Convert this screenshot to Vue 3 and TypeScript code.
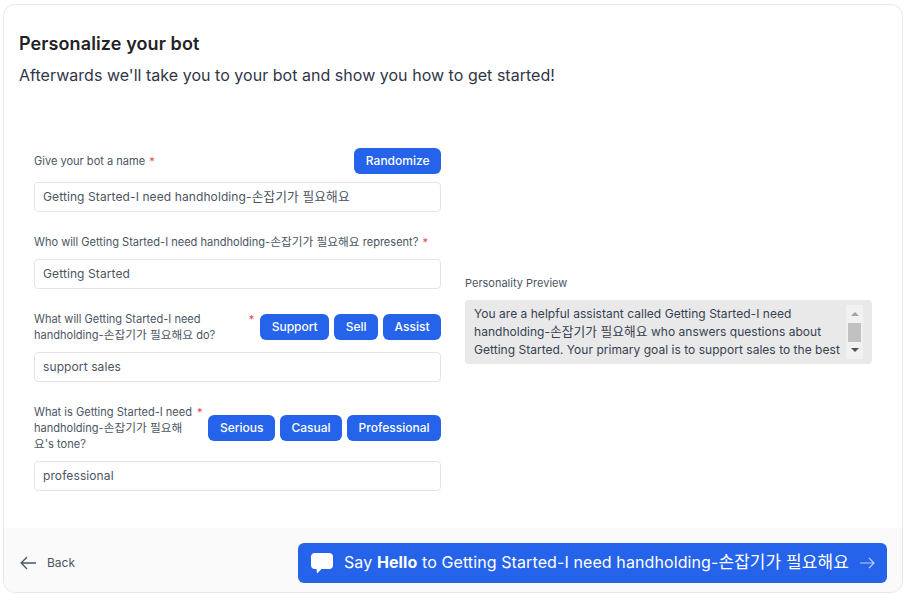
<script setup lang="ts">
import { ref } from 'vue'

const latin = 'Getting Started-I need handholding-'
const korean = '손잡기가 필요해요'

const company = ref('Getting Started')
const goal = ref('support sales')
const tone = ref('professional')

const goals = ['Support', 'Sell', 'Assist']
const tones = ['Serious', 'Casual', 'Professional']
</script>

<template>
  <div class="page">
    <div class="card">
      <div class="header">
        <h1>Personalize your bot</h1>
        <p>Afterwards we'll take you to your bot and show you how to get started!</p>
      </div>

      <div class="body">
        <div class="form">
          <div class="field">
            <div class="label-row first">
              <div class="label-text">
                <label>Give your bot a name</label>
                <span class="star">*</span>
              </div>
              <div class="buttons">
                <button type="button">Randomize</button>
              </div>
            </div>
            <div class="input" role="textbox" contenteditable="true">{{ latin }}<span class="ko">{{ korean }}</span></div>
          </div>

          <div class="field">
            <div class="label-row">
              <div class="label-text">
                <label>Who will {{ latin }}<span class="ko">{{ korean }}</span> represent?</label>
                <span class="star">*</span>
              </div>
            </div>
            <input v-model="company" class="input" type="text" />
          </div>

          <div class="field">
            <div class="label-row">
              <div class="label-text">
                <label>What will {{ latin }}<span class="ko">{{ korean }}</span> do?</label>
                <span class="star">*</span>
              </div>
              <div class="buttons">
                <button v-for="g in goals" :key="g" type="button">{{ g }}</button>
              </div>
            </div>
            <input v-model="goal" class="input" type="text" />
          </div>

          <div class="field">
            <div class="label-row">
              <div class="label-text">
                <label>What is {{ latin }}<span class="ko">{{ korean }}</span>'s tone?</label>
                <span class="star">*</span>
              </div>
              <div class="buttons">
                <button v-for="t in tones" :key="t" type="button">{{ t }}</button>
              </div>
            </div>
            <input v-model="tone" class="input" type="text" />
          </div>
        </div>

        <div class="preview">
          <div class="preview-label">Personality Preview</div>
          <div class="preview-box">
            <div class="preview-text">You are a helpful assistant called {{ latin }}<span class="ko">{{ korean }}</span> who answers questions about Getting Started. Your primary goal is to support sales to the best of your ability.</div>
            <div class="scrollbar">
              <span class="arrow up"></span>
              <span class="thumb"></span>
              <span class="arrow down"></span>
            </div>
          </div>
        </div>
      </div>

      <div class="footer">
        <a class="back">
          <svg width="17" height="14" viewBox="0 0 17 14" fill="none" stroke="#4b5563" stroke-width="1.3">
            <path d="M16 7H1.200M7 1 1.200 7 7 13" />
          </svg>
          <span class="back-text">Back</span>
        </a>
        <button type="button" class="cta">
          <svg class="bubble" width="22" height="21" viewBox="0 0 22 21" fill="#fff">
            <path d="M4 0h14a4 4 0 0 1 4 4v8a4 4 0 0 1-4 4h-7.500l-4.500 4.500-.5-4.500H4a4 4 0 0 1-4-4V4a4 4 0 0 1 4-4z" />
          </svg>
          <span class="cta-text">Say <b>Hello</b> to {{ latin }}<span class="ko">{{ korean }}</span></span>
          <svg width="15" height="12" viewBox="0 0 15 12" fill="none" stroke="#bfd0f8" stroke-width="1.2">
            <path d="M0 6h14M9 1l5 5-5 5" />
          </svg>
        </button>
      </div>
    </div>
  </div>
</template>

<style>
html,
body {
  margin: 0;
  background: #fff;
}
</style>

<style scoped>
.page {
  box-sizing: border-box;
  height: 595px;
  padding: 4px 3px 2px 3px;
  font-family: Inter, 'Noto Sans CJK KR', sans-serif;
  overflow: hidden;
}

.card {
  box-sizing: border-box;
  height: 589px;
  display: flex;
  flex-direction: column;
  border: 1px solid #e5e7eb;
  border-radius: 12px;
  overflow: hidden;
  background: #fff;
}

.ko {
  font-size: 1.06em;
  line-height: 1;
}

.header {
  padding: 27px 15px 0;
}

.header h1 {
  margin: 0;
  font-size: 18px;
  line-height: 24px;
  font-weight: 600;
  letter-spacing: 0.1px;
  color: #1f2328;
}

.header p {
  margin: 7px 0 0;
  font-size: 16px;
  line-height: 24px;
  letter-spacing: 0.03px;
  color: #2f3648;
}

.body {
  display: grid;
  grid-template-columns: 407px 407px;
  gap: 24px;
  padding: 0 30px;
  margin-top: 61px;
}

.form {
  display: flex;
  flex-direction: column;
  gap: 22px;
}

.label-row {
  display: flex;
  align-items: center;
  margin-bottom: 9px;
}

.label-row.first {
  margin-bottom: 8px;
}

.label-text {
  flex: 1;
  min-width: 0;
  display: flex;
  align-items: flex-start;
}

label {
  font-size: 11.05px;
  line-height: 16px;
  color: #4b5563;
}

.star {
  flex-shrink: 0;
  margin-left: 4px;
  font-size: 11px;
  line-height: 16px;
  color: #e5484d;
}

.buttons {
  display: flex;
  flex-shrink: 0;
  gap: 5px;
  margin-left: 6px;
}

.buttons button {
  height: 26px;
  padding: 0 11.5px 1px;
  border: 0;
  border-radius: 6px;
  background: #2563eb;
  color: #fff;
  font-family: inherit;
  font-size: 12px;
  font-weight: 500;
}

.input {
  box-sizing: border-box;
  display: block;
  width: 100%;
  height: 30px;
  padding: 0 8px 2px;
  border: 1px solid #e2e4e8;
  border-radius: 4px;
  font-family: inherit;
  font-size: 12px;
  line-height: 28px;
  letter-spacing: 0.1px;
  color: #4b5563;
  outline: none;
}

.preview {
  align-self: center;
}

.preview-label {
  margin-bottom: 9px;
  font-size: 11px;
  line-height: 16px;
  color: #4b5563;
}

.preview-box {
  box-sizing: border-box;
  display: flex;
  height: 64px;
  padding: 5px 9px;
  border-radius: 4px;
  background: #e9e9e9;
}

.preview-text {
  flex: 1;
  height: 54px;
  overflow: hidden;
  font-size: 12px;
  line-height: 18px;
  letter-spacing: 0.03px;
  color: #374151;
}

.scrollbar {
  flex-shrink: 0;
  width: 17px;
  height: 54px;
  display: flex;
  flex-direction: column;
  align-items: center;
  background: #f1f1f1;
}

.thumb {
  width: 13px;
  height: 19px;
  margin: 7px 0 6px;
  background: #c1c1c1;
}

.arrow {
  width: 0;
  height: 0;
  border-left: 4px solid transparent;
  border-right: 4px solid transparent;
}

.arrow.up {
  margin-top: 7px;
  border-bottom: 4px solid #a3a3a3;
}

.arrow.down {
  border-top: 4px solid #505050;
}

.footer {
  height: 64px;
  margin-top: auto;
  flex-shrink: 0;
  display: flex;
  align-items: flex-start;
  justify-content: space-between;
  padding: 15px 15px 0 16px;
  box-sizing: border-box;
  background: #fafafa;
}

.back {
  display: flex;
  align-items: center;
  height: 40px;
  gap: 10px;
  font-size: 12px;
  color: #4b5563;
}

.back-text {
  margin-top: -1px;
}

.cta {
  display: flex;
  align-items: center;
  width: 589px;
  height: 40px;
  padding: 0 12px 0 13px;
  border: 0;
  border-radius: 6px;
  background: #2563eb;
  color: #fff;
  font-family: inherit;
  font-size: 16px;
}

.cta-text {
  flex: 1;
  margin-left: 11px;
  padding-bottom: 2px;
  line-height: 24px;
  text-align: left;
  white-space: nowrap;
  letter-spacing: 0.1px;
}

.cta-text b {
  font-weight: 700;
}
</style>
